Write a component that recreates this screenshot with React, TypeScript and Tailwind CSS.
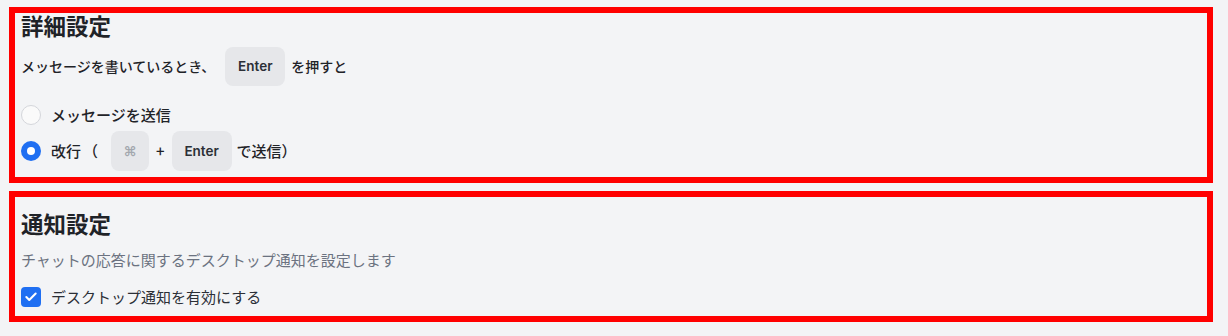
import { Check } from "lucide-react"

const font = { fontFamily: '"Noto Sans CJK JP", Inter, sans-serif' }

function Kbd({ children, className = "" }: { children: React.ReactNode; className?: string }) {
  return (
    <span
      className={`inline-flex items-center justify-center rounded-lg bg-[#e6e7ea] text-[13.5px] font-semibold ${className}`}
      style={{ fontFamily: 'Inter, "Noto Sans CJK JP", sans-serif' }}
    >
      {children}
    </span>
  )
}

function Radio({ checked }: { checked?: boolean }) {
  if (checked) {
    return (
      <span className="flex h-[20px] w-[20px] items-center justify-center rounded-full bg-[#1f6ff2]">
        <span className="h-[8px] w-[8px] rounded-full bg-white" />
      </span>
    )
  }
  return <span className="h-[20px] w-[20px] rounded-full border border-[#d4d6db] bg-[#fafafa]" />
}

export default function App() {
  return (
    <div className="min-h-[336px] w-[1228px] bg-[#f3f4f6] pl-[9px] pt-[7px]" style={font}>
      <div className="flex w-[1204px] flex-col gap-[8px]">
        {/* 詳細設定 */}
        <section className="h-[176px] border-[6px] border-[#ff0000] pl-[6px]">
          <h2 className="text-[22.5px] font-semibold leading-[24px] text-[#1f2328]">詳細設定</h2>
          <div className="mt-[10px] flex h-[39px] items-center text-[14px] font-medium text-[#1f2328]">
            <span>メッセージを書いているとき、</span>
            <Kbd className="ml-[10px] h-[39px] w-[60px] text-[#2b2f36]">Enter</Kbd>
            <span className="ml-[6px]">を押すと</span>
          </div>
          <div className="mt-[17px] flex h-[24px] items-center gap-[10px] text-[15px] font-medium text-[#1f2328]">
            <Radio />
            <span>メッセージを送信</span>
          </div>
          <div className="mt-[4px] flex h-[40px] items-center text-[15px] font-medium text-[#1f2328]">
            <Radio checked />
            <span className="ml-[10px]">改行</span>
            <span className="ml-[2px]">（</span>
            <Kbd className="ml-[13px] h-[40px] w-[38px] font-normal text-[#a3a7ae]">⌘</Kbd>
            <span className="mx-[7px]">+</span>
            <Kbd className="h-[40px] w-[60px] text-[#2b2f36]">Enter</Kbd>
            <span className="ml-[5px]">で送信）</span>
          </div>
        </section>

        {/* 通知設定 */}
        <section className="h-[131px] border-[6px] border-[#ff0000] pl-[6px] pt-[14px]">
          <h2 className="text-[22.5px] font-semibold leading-[24px] text-[#1f2328]">通知設定</h2>
          <p className="mt-[14px] text-[15px] leading-[22px] text-[#6b7280]">
            チャットの応答に関するデスクトップ通知を設定します
          </p>
          <label className="mt-[14px] flex h-[24px] items-center gap-[10px] text-[15px] text-[#2b2f36]">
            <span className="flex h-[20px] w-[20px] items-center justify-center rounded-[4px] bg-[#1f6ff2]">
              <Check className="h-[14px] w-[14px] text-white" strokeWidth={3.5} />
            </span>
            <span>デスクトップ通知を有効にする</span>
          </label>
        </section>
      </div>
    </div>
  )
}
